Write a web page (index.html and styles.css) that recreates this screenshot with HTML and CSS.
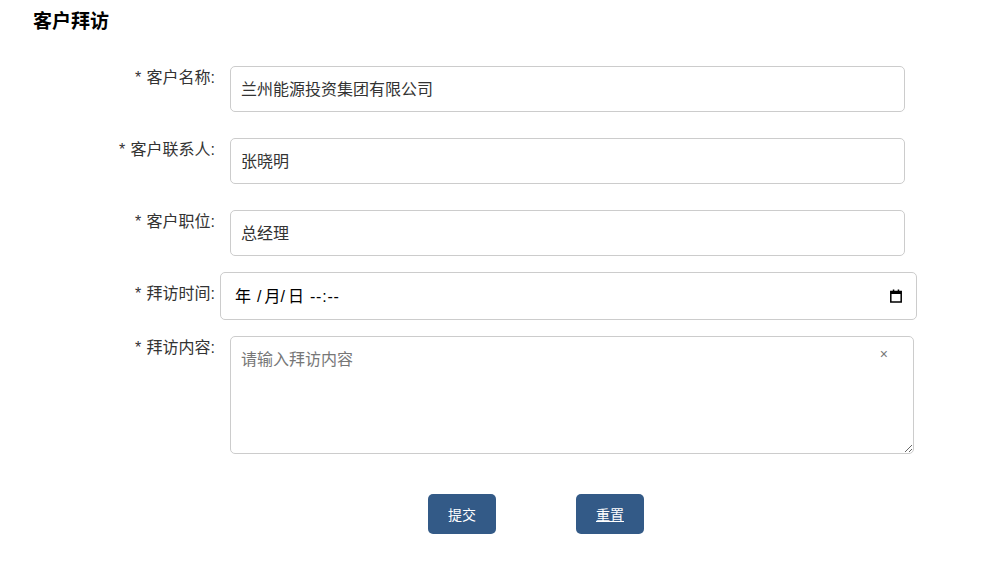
FILE: index.html
```html
<!DOCTYPE html>
<html lang="zh-CN">
<head>
    <meta charset="UTF-8">
    <meta name="viewport" content="width=device-width, initial-scale=1.0">
    <title>客户拜访</title>
    <link rel="stylesheet" href="styles.css">
</head>
<body>
    <h1 class="page-title">客户拜访</h1>

    <form class="visit-form">
        <div class="form-row">
            <label class="form-label">* 客户名称:</label>
            <input class="form-input" type="text" value="兰州能源投资集团有限公司">
        </div>
        <div class="form-row">
            <label class="form-label">* 客户联系人:</label>
            <input class="form-input" type="text" value="张晓明">
        </div>
        <div class="form-row form-row-before-date">
            <label class="form-label">* 客户职位:</label>
            <input class="form-input" type="text" value="总经理">
        </div>
        <div class="form-row form-row-date">
            <label class="form-label">* 拜访时间:</label>
            <!-- 原生日期控件的文字跟随系统语言，这里手写 -->
            <div class="date-input">
                <span class="date-text">
                    <span class="date-year">年</span>
                    <span class="date-sep">/</span>
                    <span>月</span>
                    <span class="date-sep">/</span>
                    <span>日</span>
                    <span class="date-time">--:--</span>
                </span>
                <svg class="date-icon" width="16" height="16" viewBox="0 0 16 16">
                    <path d="M2.8 3.5h10.4v10.5h-10.4z" fill="none" stroke="#000" stroke-width="1.5"/>
                    <path d="M2.8 3h10.4v3h-10.4zM4.8 1.5h1.5v2h-1.5zM9.7 1.5h1.5v2h-1.5z" fill="#000"/>
                </svg>
            </div>
        </div>
        <div class="form-row form-row-content">
            <label class="form-label">* 拜访内容:</label>
            <div class="textarea-wrap">
                <textarea class="form-textarea" placeholder="请输入拜访内容"></textarea>
                <span class="clear-icon">×</span>
            </div>
        </div>
        <div class="form-actions">
            <button class="btn" type="button">提交</button>
            <button class="btn btn-reset" type="reset">重置</button>
        </div>
    </form>
</body>
</html>
```

FILE: styles.css
```css
* {
    margin: 0;
    padding: 0;
    box-sizing: border-box;
    font-family: "Liberation Sans", "Noto Sans CJK SC", sans-serif;
}
body {
    background: #fff;
    color: #333;
}
.page-title {
    height: 66px;
    padding: 10px 0 0 33px;
    font-size: 19px;
    line-height: 24px;
    color: #000;
}
.form-row {
    display: flex;
    align-items: flex-start;
    margin-bottom: 26px;
}
.form-row-before-date,
.form-row-date {
    margin-bottom: 16px;
}
.form-row-content {
    margin-bottom: 40px;
}
.form-label {
    width: 215px;
    flex-shrink: 0;
    text-align: right;
    font-size: 16px;
    line-height: 24px;
    word-spacing: 1px;
}
.form-row-date .form-label {
    line-height: 43px;
}
.form-input {
    width: 675px;
    height: 46px;
    margin-left: 15px;
    padding: 0 10px 2px 10px;
    border: 1px solid #ccc;
    border-radius: 5px;
    font-size: 16px;
    color: #333;
    outline: none;
}
.date-input {
    width: 697px;
    height: 48px;
    margin-left: 5px;
    padding: 0 12px 2px 14px;
    border: 1px solid #ccc;
    border-radius: 5px;
    display: flex;
    align-items: center;
    justify-content: space-between;
}
.date-text {
    display: flex;
    align-items: baseline;
    font-size: 16px;
    color: #000;
}
.date-year {
    margin-right: 6px;
}
.date-sep {
    margin-right: 3px;
}
.date-time {
    margin-left: 6px;
    letter-spacing: 0.8px;
}
.date-icon {
    margin-top: 2px;
}
.textarea-wrap {
    position: relative;
    margin-left: 15px;
}
.form-textarea {
    display: block;
    width: 684px;
    height: 118px;
    padding: 12px 10px;
    border: 1px solid #ccc;
    border-radius: 5px;
    font-size: 16px;
    line-height: 22px;
    color: #333;
    outline: none;
}
.form-textarea::placeholder {
    color: #777;
}
.clear-icon {
    position: absolute;
    top: 8px;
    right: 26px;
    font-size: 14px;
    line-height: 20px;
    color: #777;
}
.form-actions {
    display: flex;
    gap: 80px;
    padding-left: 428px;
}
.btn {
    width: 68px;
    height: 40px;
    background: #335a87;
    color: #fff;
    border: none;
    border-radius: 5px;
    font-size: 14px;
    cursor: pointer;
}
.btn-reset {
    text-decoration: underline;
}
```
